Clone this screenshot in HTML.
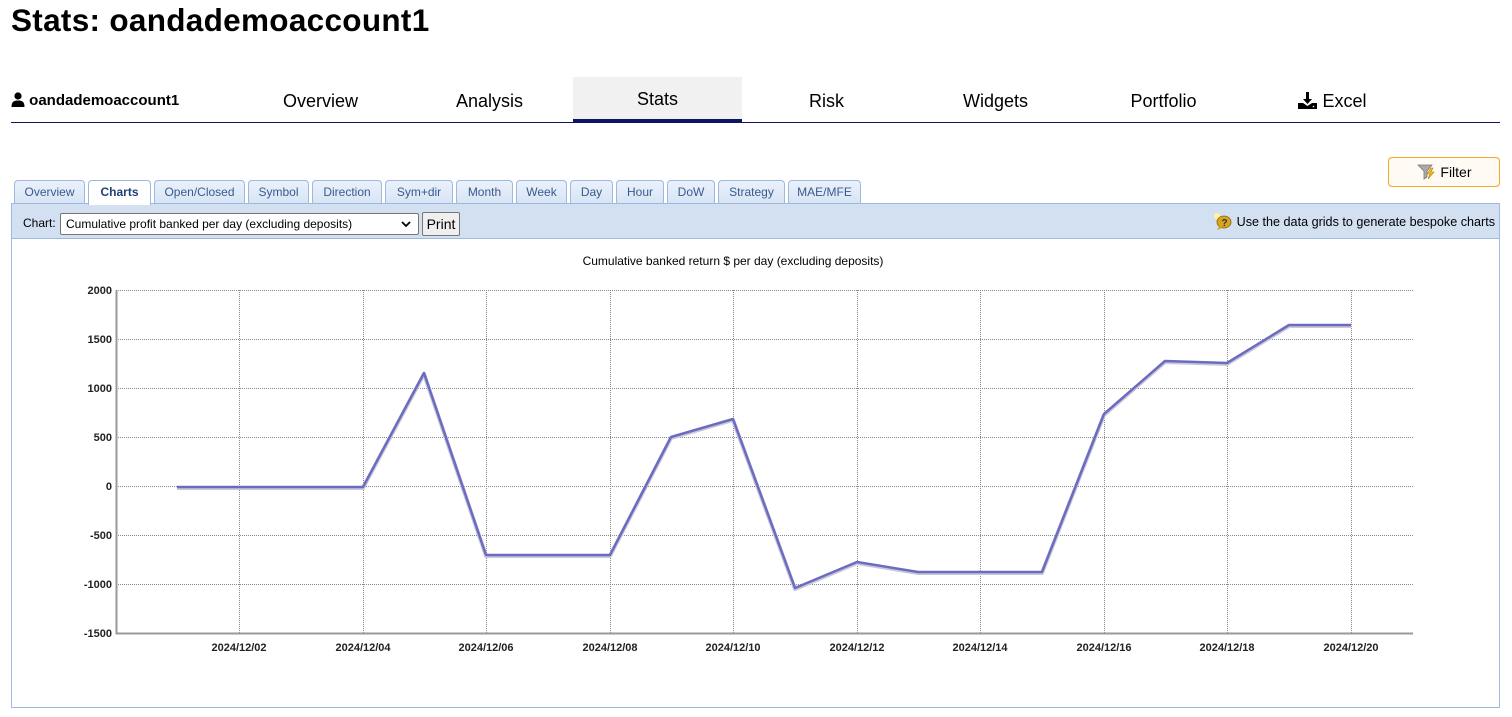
<!DOCTYPE html>
<html><head><meta charset="utf-8"><style>
*{margin:0;padding:0;box-sizing:border-box}
body{width:1512px;height:717px;background:#fff;font-family:"Liberation Sans","DejaVu Sans",sans-serif;position:relative;overflow:hidden;color:#000}
.abs{position:absolute}
h1{position:absolute;left:11px;top:0;font-size:31.5px;font-weight:bold;line-height:40px;letter-spacing:0.3px}
.nav{position:absolute;top:77px;height:45px;font-size:18px;line-height:48px;text-align:center;width:169px}
.tab{position:absolute;top:180px;height:24px;border:1px solid #9fb8de;border-bottom:none;border-radius:4px 4px 0 0;background:linear-gradient(#eaf1fb,#d7e4f5);font-size:12px;color:#3a5a8c;text-align:center;line-height:22px}
.tab.act{background:#fff;color:#1e3e78;font-weight:bold;height:25px;z-index:2}
</style></head><body>
<h1>Stats: oandademoaccount1</h1>
<div class="abs" style="left:11px;top:91px;font-size:15px;font-weight:bold;line-height:20px">
<svg width="14" height="15" viewBox="0 0 14 15" style="vertical-align:-2px"><circle cx="7" cy="4" r="3.6" fill="#000"/><path d="M0.5 15 C0.5 9.5 3 8.5 7 8.5 C11 8.5 13.5 9.5 13.5 15Z" fill="#000"/></svg> oandademoaccount1</div>
<div class="nav" style="left:236px">Overview</div>
<div class="nav" style="left:405px">Analysis</div>
<div class="nav" style="left:573px;background:#f1f1f1;line-height:44px">Stats</div>
<div class="nav" style="left:742px">Risk</div>
<div class="nav" style="left:911px">Widgets</div>
<div class="nav" style="left:1079px">Portfolio</div>
<div class="nav" style="left:1248px"><svg width="19" height="17" viewBox="0 0 19 17" style="vertical-align:-2px"><path d="M8 0h3v7h3l-4.5 5L5 7h3z" fill="#000"/><path d="M0 11h5l4.5 3 4.5-3h5v6H0z" fill="#000"/><circle cx="15.5" cy="14.5" r="0.8" fill="#fff"/></svg> Excel</div>
<div class="abs" style="left:573px;top:119px;width:169px;height:3px;background:#0d1560"></div>
<div class="abs" style="left:11px;top:122px;width:1489px;height:1px;background:#0d1560"></div>

<div class="abs" style="left:1388px;top:157px;width:112px;height:30px;border:1px solid #f5a623;border-radius:4px;background:#fffaf4;font-size:14px;line-height:28px;text-align:center">
<svg width="20" height="16" viewBox="0 0 20 16" style="vertical-align:-3px"><path d="M1 1h14l-5 6v6l-3 2V7z" fill="#aaa" stroke="#777" stroke-width="0.8"/><path d="M14 4l-4 6h3l-2 5 6-7h-3l2-4z" fill="#f0c020" stroke="#b08000" stroke-width="0.6"/></svg> Filter</div>

<div class="tab" style="left:14px;width:71px">Overview</div>
<div class="tab act" style="left:88px;width:63px">Charts</div>
<div class="tab" style="left:154px;width:91px">Open/Closed</div>
<div class="tab" style="left:248px;width:61px">Symbol</div>
<div class="tab" style="left:312px;width:70px">Direction</div>
<div class="tab" style="left:385px;width:68px">Sym+dir</div>
<div class="tab" style="left:456px;width:57px">Month</div>
<div class="tab" style="left:516px;width:51px">Week</div>
<div class="tab" style="left:570px;width:43px">Day</div>
<div class="tab" style="left:616px;width:48px">Hour</div>
<div class="tab" style="left:667px;width:48px">DoW</div>
<div class="tab" style="left:718px;width:67px">Strategy</div>
<div class="tab" style="left:788px;width:73px">MAE/MFE</div>

<div class="abs" style="left:11px;top:203px;width:1489px;height:505px;border:1px solid #9fb8de;background:#fff"></div>
<div class="abs" style="left:12px;top:204px;width:1487px;height:35px;background:#d3e0f1;border-bottom:1px solid #9fb8de"></div>
<div class="abs" style="left:23px;top:216px;font-size:12px">Chart:</div>
<div class="abs" style="left:60px;top:213px;width:359px;height:22px;border:1px solid #767676;border-radius:2px;background:#fff;font-size:12px;line-height:20px;padding-left:5px">Cumulative profit banked per day (excluding deposits)
<svg class="abs" style="right:7px;top:7px" width="10" height="7" viewBox="0 0 10 7"><path d="M1 1l4 4 4-4" fill="none" stroke="#000" stroke-width="1.8"/></svg></div>
<div class="abs" style="left:422px;top:212px;width:38px;height:24px;border:1px solid #767676;border-radius:2px;background:#efefef;font-size:14px;line-height:22px;text-align:center">Print</div>
<div class="abs" style="right:17px;top:212px;font-size:12.6px;line-height:18px">
<svg width="20" height="18" viewBox="0 0 20 18" style="vertical-align:-4px"><circle cx="4" cy="4" r="3" fill="#fff3a0"/><ellipse cx="11" cy="10" rx="7" ry="6" fill="#d9a520" stroke="#8a6000" stroke-width="0.8"/><path d="M6 14l-2 4 5-2z" fill="#d9a520"/><text x="8.5" y="14" font-size="10" font-weight="bold" fill="#333" font-family="Liberation Sans">?</text></svg> Use the data grids to generate bespoke charts</div>

<svg class="abs" style="left:0;top:0" width="1512" height="717">
<text x="733" y="265" font-size="12" text-anchor="middle" font-family="Liberation Sans" fill="#000">Cumulative banked return $ per day (excluding deposits)</text>
<g stroke="#888" stroke-width="1" stroke-dasharray="1,1" fill="none">
<path d="M116 290.5H1413M116 339.5H1413M116 388.5H1413M116 437.5H1413M116 486.5H1413M116 535.5H1413M116 584.5H1413"/>
<path d="M239.5 290V633M363.5 290V633M486.5 290V633M610.5 290V633M733.5 290V633M857.5 290V633M980.5 290V633M1104.5 290V633M1227.5 290V633M1351.5 290V633"/>
</g>
<path d="M116.5 290V633.5H1413" stroke="#999" stroke-width="2" fill="none"/>
<g font-size="11" font-family="Liberation Sans" fill="#222" text-anchor="end" font-weight="bold">
<text x="112" y="294">2000</text><text x="112" y="343">1500</text><text x="112" y="392">1000</text><text x="112" y="441">500</text><text x="112" y="490">0</text><text x="112" y="539">-500</text><text x="112" y="588">-1000</text><text x="112" y="637">-1500</text>
</g>
<g font-size="11" font-family="Liberation Sans" fill="#222" text-anchor="middle" font-weight="bold">
<text x="239" y="651">2024/12/02</text><text x="363" y="651">2024/12/04</text><text x="486" y="651">2024/12/06</text><text x="610" y="651">2024/12/08</text><text x="733" y="651">2024/12/10</text><text x="857" y="651">2024/12/12</text><text x="980" y="651">2024/12/14</text><text x="1104" y="651">2024/12/16</text><text x="1227" y="651">2024/12/18</text><text x="1351" y="651">2024/12/20</text>
</g>
<polyline points="177,487 239,487 301,487 363,487 424,373 486,555 548,555 610,555 671,437 733,419 795,588 857,562 918,572 980,572 1042,572 1104,414 1165,361 1227,363 1289,325 1351,325" fill="none" stroke="#c8c8d8" stroke-width="4" stroke-linejoin="round" transform="translate(0,1)"/>
<polyline points="177,487 239,487 301,487 363,487 424,373 486,555 548,555 610,555 671,437 733,419 795,588 857,562 918,572 980,572 1042,572 1104,414 1165,361 1227,363 1289,325 1351,325" fill="none" stroke="#6b6bc2" stroke-width="2.5" stroke-linejoin="round"/>
</svg>
</body></html>
